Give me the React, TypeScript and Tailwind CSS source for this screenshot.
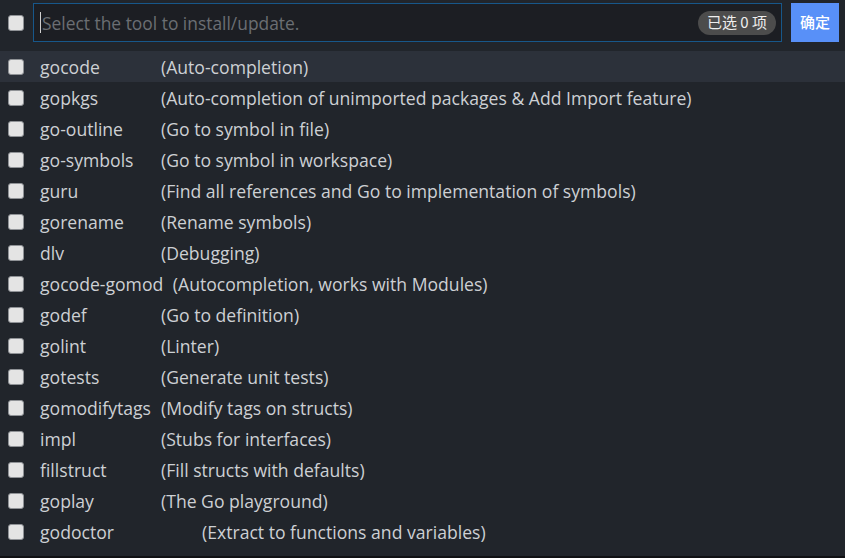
const tools = [
  { name: 'gocode', desc: '(Auto-completion)' },
  { name: 'gopkgs', desc: '(Auto-completion of unimported packages & Add Import feature)' },
  { name: 'go-outline', desc: '(Go to symbol in file)' },
  { name: 'go-symbols', desc: '(Go to symbol in workspace)' },
  { name: 'guru', desc: '(Find all references and Go to implementation of symbols)' },
  { name: 'gorename', desc: '(Rename symbols)' },
  { name: 'dlv', desc: '(Debugging)' },
  { name: 'gocode-gomod', desc: '(Autocompletion, works with Modules)', gap: true },
  { name: 'godef', desc: '(Go to definition)' },
  { name: 'golint', desc: '(Linter)' },
  { name: 'gotests', desc: '(Generate unit tests)' },
  { name: 'gomodifytags', desc: '(Modify tags on structs)' },
  { name: 'impl', desc: '(Stubs for interfaces)' },
  { name: 'fillstruct', desc: '(Fill structs with defaults)' },
  { name: 'goplay', desc: '(The Go playground)' },
  { name: 'godoctor', desc: '(Extract to functions and variables)', wide: true },
];

function Box() {
  return (
    <div className="h-[16px] w-[16px] shrink-0 rounded-[3px] border border-[#8f9296] bg-[#e4e4e4]" />
  );
}

export default function App() {
  return (
    <div className="flex h-[558px] w-[845px] flex-col bg-[#21252b] font-['Open_Sans',sans-serif] text-[#cdd0d4]">
      {/* header */}
      <div className="flex h-[51px] items-start pt-[3px]">
        <div className="flex h-[39px] w-[33px] items-center pl-[8px]">
          <Box />
        </div>
        <div className="flex h-[39px] w-[749px] items-center border border-[#17578a] bg-[#1c1e23] pl-[6px] pr-[5px]">
          <div className="h-[21px] w-px bg-[#d0d0d0]" />
          <span className="ml-px flex-1 pt-[2px] text-[17.4px] text-[#6b6e73]">Select the tool to install/update.</span>
          <span className="flex h-[24px] items-center rounded-full bg-[#4c4c4c] px-[9px] font-['Noto_Sans_CJK_SC',sans-serif] text-[15px] text-[#eeeeee]">
            已选 0 项
          </span>
        </div>
        <button className="ml-[9px] h-[39px] w-[48px] bg-[#5890f8] font-['Noto_Sans_CJK_SC',sans-serif] text-[15px] font-medium text-white">
          确定
        </button>
      </div>

      {/* list */}
      <div className="flex-1">
        {tools.map((t, i) => (
          <div
            key={t.name}
            className={`flex h-[31px] items-center text-[17.6px] ${i === 0 ? 'bg-[#2c313a]' : ''}`}
          >
            <div className="flex w-[40px] pl-[8px]">
              <Box />
            </div>
            <span className={`whitespace-pre pt-[2px] ${t.wide ? 'min-w-[162px]' : 'min-w-[121px]'} ${t.gap ? 'pr-[5px]' : ''}`}>
              {t.name}{' '}
            </span>
            <span className="whitespace-pre pt-[2px]">{t.desc}</span>
          </div>
        ))}
      </div>
      <div className="h-[2px] bg-[#101114]" />
    </div>
  );
}
